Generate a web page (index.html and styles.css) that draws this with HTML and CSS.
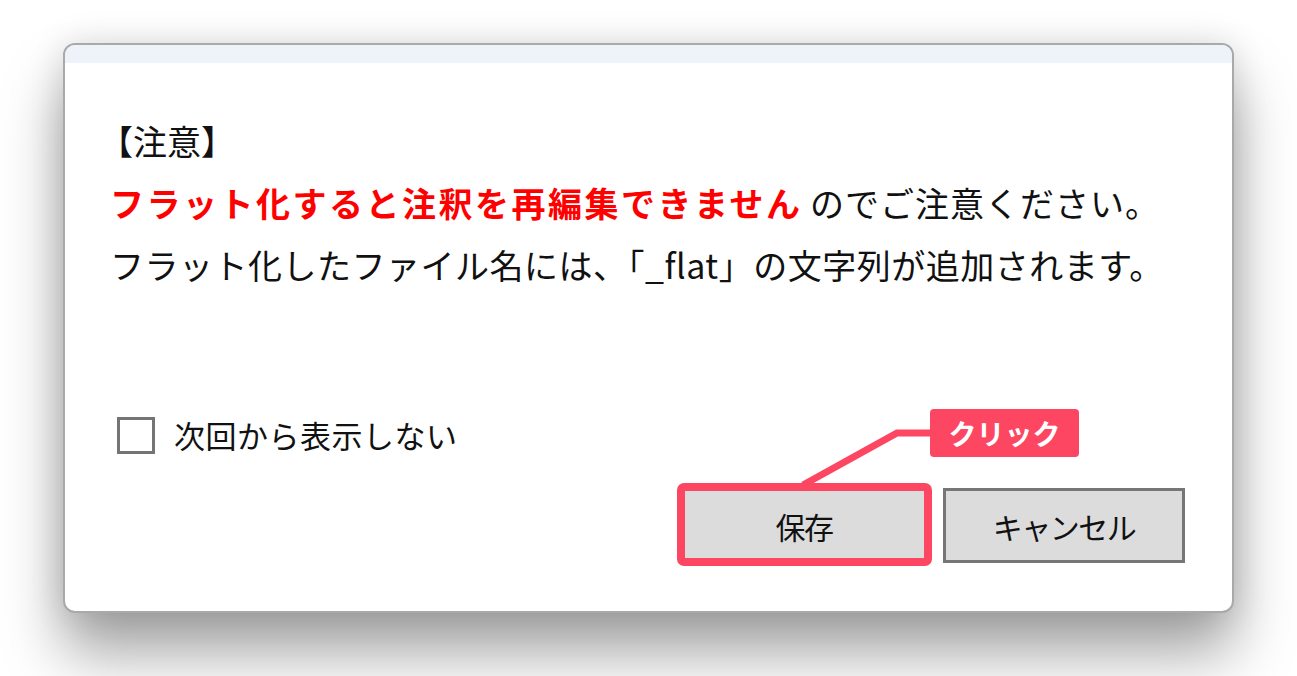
FILE: index.html
```html
<!DOCTYPE html>
<html lang="ja">
<head>
    <meta charset="UTF-8">
    <meta name="viewport" content="width=device-width, initial-scale=1.0">
    <title>フラット化の注意</title>
    <link rel="stylesheet" href="styles.css">
</head>
<body>
    <div class="dialog">
        <div class="dialog-title"></div>
        <div class="dialog-body">
            <div class="message">
                <p class="heading">【注意】</p>
                <p><span class="warn">フラット化すると注釈を再編集できません</span> <span class="rest">のでご注意ください。</span></p>
                <p class="wide">フラット化したファイル名には、「_flat」の文字列が追加されます。</p>
            </div>

            <label class="check-row">
                <span class="check-box"></span>
                <span>次回から表示しない</span>
            </label>

            <div class="buttons">
                <div class="save-wrap">
                    <button class="btn btn-save">保存</button>
                    <span class="highlight"></span>
                    <svg class="pointer" width="260" height="90" viewBox="0 0 260 90">
                        <polyline points="120,87 214,35 250,35" fill="none" stroke="#fd4762" stroke-width="7" stroke-linejoin="miter"/>
                    </svg>
                    <span class="callout">クリック</span>
                </div>
                <button class="btn">キャンセル</button>
            </div>
        </div>
    </div>
</body>
</html>
```

FILE: styles.css
```css
html {
    background-color: #ffffff;
}

body {
    margin: 0;
    padding: 43px 63px 63px;
    min-height: 676px;
    box-sizing: border-box;
    font-family: "Noto Sans CJK JP", "Noto Sans", sans-serif;
    color: #111111;
}

.dialog {
    height: 570px;
    box-sizing: border-box;
    background-color: #ffffff;
    border: 2px solid #a9a9a9;
    border-radius: 12px;
    overflow: hidden;
    box-shadow: 0 40px 60px rgba(0, 0, 0, 0.36), 0 0 34px rgba(0, 0, 0, 0.13);
}

.dialog-title {
    height: 18px;
    background-color: #eef2f9;
}

.dialog-body {
    padding: 47px 47px 0 45px;
}

.message p {
    margin: 0;
    font-size: 34px;
    line-height: 62px;
    white-space: nowrap;
}

.message .heading {
    margin-left: -11px;
}

.message .wide {
    letter-spacing: 0.5px;
}

.warn {
    color: #ff0000;
    font-weight: bold;
    letter-spacing: 2.5px;
}

.rest {
    letter-spacing: 1px;
}

.check-row {
    display: flex;
    align-items: center;
    gap: 19px;
    margin-top: 120px;
    margin-left: 7px;
    font-size: 31px;
    line-height: 38px;
    letter-spacing: 0.5px;
}

.check-box {
    width: 38px;
    height: 37px;
    box-sizing: border-box;
    border: 3px solid #747474;
    background-color: #ffffff;
}

.buttons {
    display: flex;
    justify-content: flex-end;
    gap: 18px;
    margin-top: 34px;
}

.btn {
    width: 242px;
    height: 75px;
    background-color: #dcdcdc;
    border: 3px solid #767676;
    font-family: "Noto Sans CJK JP", "Noto Sans", sans-serif;
    font-size: 30px;
    letter-spacing: -1.5px;
    color: #111111;
    padding: 0;
}

.save-wrap {
    position: relative;
}

.btn-save {
    border: 1px solid #0078d7;
}

.highlight {
    position: absolute;
    left: -6px;
    top: -5px;
    width: 255px;
    height: 83px;
    box-sizing: border-box;
    border: 8px solid #fd4762;
    border-radius: 7px;
}

.pointer {
    position: absolute;
    left: 0;
    top: -90px;
    overflow: visible;
}

.callout {
    position: absolute;
    left: 247px;
    top: -79px;
    width: 149px;
    height: 48px;
    border-radius: 4px;
    background-color: #fd4762;
    color: #ffffff;
    font-size: 28px;
    font-weight: bold;
    line-height: 48px;
    text-align: center;
    white-space: nowrap;
}
```
